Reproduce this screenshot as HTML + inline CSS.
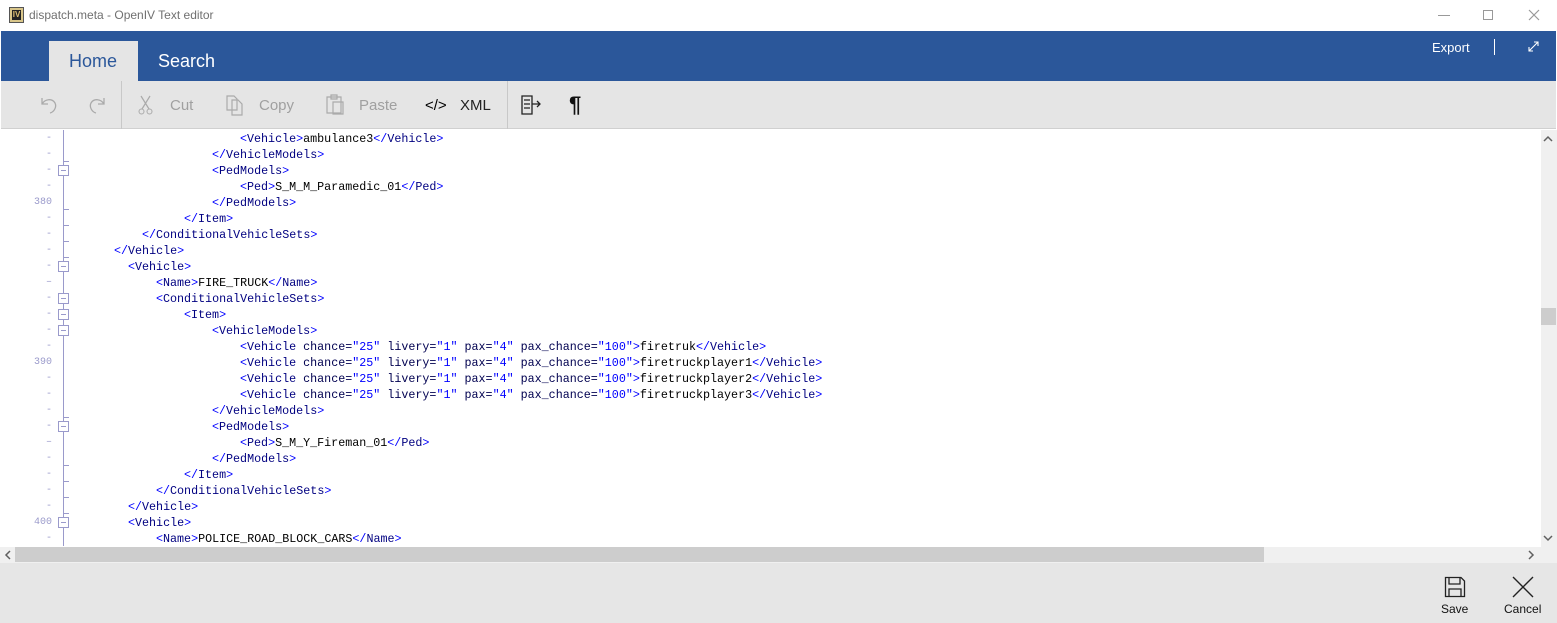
<!DOCTYPE html>
<html><head><meta charset="utf-8"><style>
*{margin:0;padding:0;box-sizing:border-box}
body{width:1557px;height:623px;overflow:hidden;background:#fff;font-family:"Liberation Sans",sans-serif;position:relative}
.a{position:absolute}
.code{position:absolute;font-family:"Liberation Mono",monospace;font-size:11.7px;line-height:16px;white-space:pre;color:#000;margin-top:1px}
.b{color:#0000ff}.t{color:#000080}.v{color:#0000ff}.n{color:#000050}
.ln{position:absolute;left:0;width:52px;text-align:right;font-family:"Liberation Mono",monospace;font-size:10px;color:#9a9acb;line-height:16px;padding-top:1px}
.box{position:absolute;left:58px;width:11px;height:11px;border:1px solid #9a9acb;background:#fff}
.box:after{content:"";position:absolute;left:2px;top:4px;width:5px;height:1px;background:#9a9acb}
.end{position:absolute;left:63px;width:6px;height:1px;background:#9a9acb}
.tb{position:absolute;top:97px;font-size:15px;color:#a0a0a0}
</style></head><body>
<div class="a" style="left:0;top:0;width:1557px;height:31px;background:#fff"></div>
<div class="a" style="left:9px;top:7px;width:15px;height:16px;background:#d9c68a;border:1px solid #555"><div style="position:absolute;left:2px;top:2px;width:9px;height:10px;background:#222;color:#e0c070;font-size:8px;font-weight:bold;line-height:10px;text-align:center">IV</div></div>
<div class="a" style="left:29px;top:8px;font-size:12px;color:#707070">dispatch.meta - OpenIV Text editor</div>
<div class="a" style="left:1438px;top:15px;width:12px;height:1px;background:#999"></div>
<div class="a" style="left:1483px;top:10px;width:10px;height:10px;border:1px solid #999"></div>
<svg class="a" style="left:1528px;top:9px" width="12" height="12"><path d="M1 1L11 11M11 1L1 11" stroke="#999" stroke-width="1.2"/></svg>
<div class="a" style="left:1px;top:31px;width:1555px;height:50px;background:#2b579a"></div>
<div class="a" style="left:49px;top:41px;width:89px;height:40px;background:#e5e5e5"></div>
<div class="a" style="left:69px;top:51px;font-size:18px;color:#2b579a">Home</div>
<div class="a" style="left:158px;top:51px;font-size:18px;color:#fff">Search</div>
<div class="a" style="left:1432px;top:40px;font-size:13px;color:#fff">Export</div>
<div class="a" style="left:1494px;top:39px;width:1px;height:16px;background:#fff"></div>
<svg class="a" style="left:1528px;top:41px" width="11" height="11"><path d="M1 10L10 1M6 1H10V5M1 6V10H5" stroke="#fff" fill="none" stroke-width="1.1"/></svg>
<div class="a" style="left:1px;top:81px;width:1555px;height:48px;background:#e5e5e5;border-bottom:1px solid #d0d0d0"></div>
<svg class="a" style="left:38px;top:94px" width="22" height="22"><path d="M4 4V10H10M4 10C7 5 14 4 17 9C19 13 16 18 12 19" stroke="#aaa" fill="none" stroke-width="1.3"/></svg>
<svg class="a" style="left:86px;top:94px" width="22" height="22"><path d="M18 4V10H12M18 10C15 5 8 4 5 9C3 13 6 18 10 19" stroke="#aaa" fill="none" stroke-width="1.3"/></svg>
<div class="a" style="left:121px;top:81px;width:1px;height:48px;background:#c8c8c8"></div>
<svg class="a" style="left:137px;top:94px" width="18" height="22"><path d="M4 2L12 15M13 2L5 15" stroke="#aaa" fill="none" stroke-width="1.2"/><circle cx="4.5" cy="17.5" r="2.5" stroke="#aaa" fill="none"/><circle cx="12.5" cy="17.5" r="2.5" stroke="#aaa" fill="none"/></svg>
<div class="tb" style="left:170px">Cut</div>
<svg class="a" style="left:225px;top:94px" width="20" height="22"><path d="M2 2H9L12 5V16H2Z M7 6H13L17 10V21H7Z" stroke="#aaa" fill="#e5e5e5" stroke-width="1.2"/></svg>
<div class="tb" style="left:259px">Copy</div>
<svg class="a" style="left:324px;top:93px" width="22" height="23"><path d="M3 4H17V20H3Z M7 2H13V6H7Z M9 9H19V21H9Z" stroke="#aaa" fill="#e5e5e5" stroke-width="1.2"/></svg>
<div class="tb" style="left:359px">Paste</div>
<div class="a" style="left:425px;top:97px;font-size:15px;color:#000">&lt;/&gt;</div>
<div class="tb" style="left:460px;color:#222">XML</div>
<div class="a" style="left:507px;top:81px;width:1px;height:48px;background:#c8c8c8"></div>
<svg class="a" style="left:520px;top:94px" width="24" height="22"><path d="M2 2H12V20H2Z M4 6H10M4 10H10M4 14H10M12 10H20M17 7L20 10L17 13" stroke="#222" fill="none" stroke-width="1.3"/></svg>
<div class="a" style="left:569px;top:92px;font-size:22px;color:#111;font-weight:bold">¶</div>
<div class="a" style="left:63px;top:130px;width:1px;height:416px;background:#9a9acb"></div>
<div class="ln" style="top:130px">-</div><div class="ln" style="top:146px">-</div><div class="ln" style="top:162px">-</div><div class="ln" style="top:178px">-</div><div class="ln" style="top:194px">380</div><div class="ln" style="top:210px">-</div><div class="ln" style="top:226px">-</div><div class="ln" style="top:242px">-</div><div class="ln" style="top:258px">-</div><div class="ln" style="top:274px">–</div><div class="ln" style="top:290px">-</div><div class="ln" style="top:306px">-</div><div class="ln" style="top:322px">-</div><div class="ln" style="top:338px">-</div><div class="ln" style="top:354px">390</div><div class="ln" style="top:370px">-</div><div class="ln" style="top:386px">-</div><div class="ln" style="top:402px">-</div><div class="ln" style="top:418px">-</div><div class="ln" style="top:434px">–</div><div class="ln" style="top:450px">-</div><div class="ln" style="top:466px">-</div><div class="ln" style="top:482px">-</div><div class="ln" style="top:498px">-</div><div class="ln" style="top:514px">400</div><div class="ln" style="top:530px">-</div>
<div class="end" style="top:161px"></div><div class="end" style="top:209px"></div><div class="end" style="top:225px"></div><div class="end" style="top:241px"></div><div class="end" style="top:257px"></div>
<div class="end" style="top:417px"></div><div class="end" style="top:465px"></div><div class="end" style="top:481px"></div><div class="end" style="top:497px"></div><div class="end" style="top:513px"></div>
<div class="box" style="top:165px"></div><div class="box" style="top:261px"></div><div class="box" style="top:293px"></div><div class="box" style="top:309px"></div><div class="box" style="top:325px"></div><div class="box" style="top:421px"></div><div class="box" style="top:517px"></div>

<div class="code" style="left:240px;top:130px"><span class="b">&lt;</span><span class="t">Vehicle</span><span class="b">&gt;</span>ambulance3<span class="b">&lt;/</span><span class="t">Vehicle</span><span class="b">&gt;</span></div>
<div class="code" style="left:212px;top:146px"><span class="b">&lt;/</span><span class="t">VehicleModels</span><span class="b">&gt;</span></div>
<div class="code" style="left:212px;top:162px"><span class="b">&lt;</span><span class="t">PedModels</span><span class="b">&gt;</span></div>
<div class="code" style="left:240px;top:178px"><span class="b">&lt;</span><span class="t">Ped</span><span class="b">&gt;</span>S_M_M_Paramedic_01<span class="b">&lt;/</span><span class="t">Ped</span><span class="b">&gt;</span></div>
<div class="code" style="left:212px;top:194px"><span class="b">&lt;/</span><span class="t">PedModels</span><span class="b">&gt;</span></div>
<div class="code" style="left:184px;top:210px"><span class="b">&lt;/</span><span class="t">Item</span><span class="b">&gt;</span></div>
<div class="code" style="left:142px;top:226px"><span class="b">&lt;/</span><span class="t">ConditionalVehicleSets</span><span class="b">&gt;</span></div>
<div class="code" style="left:114px;top:242px"><span class="b">&lt;/</span><span class="t">Vehicle</span><span class="b">&gt;</span></div>
<div class="code" style="left:128px;top:258px"><span class="b">&lt;</span><span class="t">Vehicle</span><span class="b">&gt;</span></div>
<div class="code" style="left:156px;top:274px"><span class="b">&lt;</span><span class="t">Name</span><span class="b">&gt;</span>FIRE_TRUCK<span class="b">&lt;/</span><span class="t">Name</span><span class="b">&gt;</span></div>
<div class="code" style="left:156px;top:290px"><span class="b">&lt;</span><span class="t">ConditionalVehicleSets</span><span class="b">&gt;</span></div>
<div class="code" style="left:184px;top:306px"><span class="b">&lt;</span><span class="t">Item</span><span class="b">&gt;</span></div>
<div class="code" style="left:212px;top:322px"><span class="b">&lt;</span><span class="t">VehicleModels</span><span class="b">&gt;</span></div>
<div class="code" style="left:240px;top:338px"><span class="b">&lt;</span><span class="t">Vehicle</span> <span class="n">chance=</span><span class="v">"25"</span> <span class="n">livery=</span><span class="v">"1"</span> <span class="n">pax=</span><span class="v">"4"</span> <span class="n">pax_chance=</span><span class="v">"100"</span><span class="b">&gt;</span>firetruk<span class="b">&lt;/</span><span class="t">Vehicle</span><span class="b">&gt;</span></div>
<div class="code" style="left:240px;top:354px"><span class="b">&lt;</span><span class="t">Vehicle</span> <span class="n">chance=</span><span class="v">"25"</span> <span class="n">livery=</span><span class="v">"1"</span> <span class="n">pax=</span><span class="v">"4"</span> <span class="n">pax_chance=</span><span class="v">"100"</span><span class="b">&gt;</span>firetruckplayer1<span class="b">&lt;/</span><span class="t">Vehicle</span><span class="b">&gt;</span></div>
<div class="code" style="left:240px;top:370px"><span class="b">&lt;</span><span class="t">Vehicle</span> <span class="n">chance=</span><span class="v">"25"</span> <span class="n">livery=</span><span class="v">"1"</span> <span class="n">pax=</span><span class="v">"4"</span> <span class="n">pax_chance=</span><span class="v">"100"</span><span class="b">&gt;</span>firetruckplayer2<span class="b">&lt;/</span><span class="t">Vehicle</span><span class="b">&gt;</span></div>
<div class="code" style="left:240px;top:386px"><span class="b">&lt;</span><span class="t">Vehicle</span> <span class="n">chance=</span><span class="v">"25"</span> <span class="n">livery=</span><span class="v">"1"</span> <span class="n">pax=</span><span class="v">"4"</span> <span class="n">pax_chance=</span><span class="v">"100"</span><span class="b">&gt;</span>firetruckplayer3<span class="b">&lt;/</span><span class="t">Vehicle</span><span class="b">&gt;</span></div>
<div class="code" style="left:212px;top:402px"><span class="b">&lt;/</span><span class="t">VehicleModels</span><span class="b">&gt;</span></div>
<div class="code" style="left:212px;top:418px"><span class="b">&lt;</span><span class="t">PedModels</span><span class="b">&gt;</span></div>
<div class="code" style="left:240px;top:434px"><span class="b">&lt;</span><span class="t">Ped</span><span class="b">&gt;</span>S_M_Y_Fireman_01<span class="b">&lt;/</span><span class="t">Ped</span><span class="b">&gt;</span></div>
<div class="code" style="left:212px;top:450px"><span class="b">&lt;/</span><span class="t">PedModels</span><span class="b">&gt;</span></div>
<div class="code" style="left:184px;top:466px"><span class="b">&lt;/</span><span class="t">Item</span><span class="b">&gt;</span></div>
<div class="code" style="left:156px;top:482px"><span class="b">&lt;/</span><span class="t">ConditionalVehicleSets</span><span class="b">&gt;</span></div>
<div class="code" style="left:128px;top:498px"><span class="b">&lt;/</span><span class="t">Vehicle</span><span class="b">&gt;</span></div>
<div class="code" style="left:128px;top:514px"><span class="b">&lt;</span><span class="t">Vehicle</span><span class="b">&gt;</span></div>
<div class="code" style="left:156px;top:530px"><span class="b">&lt;</span><span class="t">Name</span><span class="b">&gt;</span>POLICE_ROAD_BLOCK_CARS<span class="b">&lt;/</span><span class="t">Name</span><span class="b">&gt;</span></div>
<div class="a" style="left:1541px;top:130px;width:16px;height:417px;background:#f0f0f0"></div>
<div class="a" style="left:1541px;top:308px;width:15px;height:17px;background:#cdcdcd"></div>
<svg class="a" style="left:1543px;top:135px" width="10" height="8"><path d="M1 6L5 2L9 6" stroke="#606060" fill="none" stroke-width="1.5"/></svg>
<svg class="a" style="left:1543px;top:534px" width="10" height="8"><path d="M1 2L5 6L9 2" stroke="#606060" fill="none" stroke-width="1.5"/></svg>
<div class="a" style="left:0;top:547px;width:1557px;height:16px;background:#f0f0f0"></div>
<div class="a" style="left:15px;top:547px;width:1249px;height:15px;background:#cdcdcd"></div>
<svg class="a" style="left:4px;top:550px" width="8" height="10"><path d="M6 1L2 5L6 9" stroke="#606060" fill="none" stroke-width="1.5"/></svg>
<svg class="a" style="left:1527px;top:550px" width="8" height="10"><path d="M2 1L6 5L2 9" stroke="#606060" fill="none" stroke-width="1.5"/></svg>
<div class="a" style="left:0;top:563px;width:1557px;height:60px;background:#e6e6e6"></div>
<svg class="a" style="left:1444px;top:576px" width="22" height="22"><path d="M1.5 1.5H17L20.5 5V20.5H1.5Z M5 1.5V8H16V1.5 M5 20.5V13H17V20.5" stroke="#222" fill="none" stroke-width="1.3"/></svg>
<div class="a" style="left:1441px;top:602px;font-size:12px;color:#111">Save</div>
<svg class="a" style="left:1512px;top:576px" width="22" height="22"><path d="M1 1L21 21M21 1L1 21" stroke="#222" fill="none" stroke-width="1.4"/></svg>
<div class="a" style="left:1504px;top:602px;font-size:12px;color:#111">Cancel</div>
</body></html>
